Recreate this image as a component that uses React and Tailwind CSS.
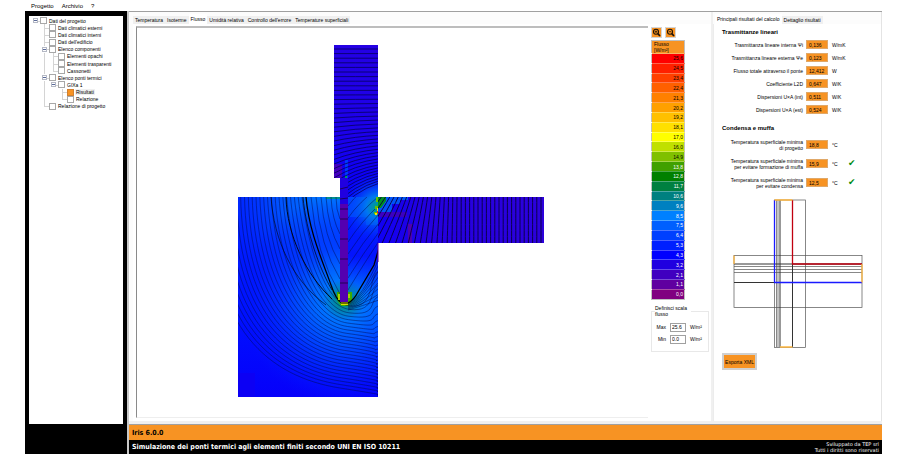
import { useState } from 'react';

// ====================================================
// DATA
// ====================================================
// guides: one entry per indent column
// "v" line passes through, "t" branch, "l" last branch, "b" expander box
const TREE = [
  { label: 'Dati del progetto', guides: ['b'] },
  { label: 'Dati climatici esterni', guides: ['', 't'] },
  { label: 'Dati climatici interni', guides: ['', 't'] },
  { label: "Dati dell'edificio", guides: ['', 't'] },
  { label: 'Elenco componenti', guides: ['', 'b'] },
  { label: 'Elementi opachi', guides: ['', 'v', 't'] },
  { label: 'Elementi trasparenti', guides: ['', 'v', 't'] },
  { label: 'Cassonetti', guides: ['', 'v', 'l'] },
  { label: 'Elenco ponti termici', guides: ['', 'b'] },
  { label: 'GIXa 1', guides: ['', 'v', 'b'] },
  { label: 'Risultati', guides: ['', 'v', '', 't'], active: true },
  { label: 'Relazione', guides: ['', 'v', '', 'l'] },
  { label: 'Relazione di progetto', guides: ['', 'l'] },
];

const SCALE = [
  ['25,6', 'bg-[#ff0000] text-black'],
  ['24,5', 'bg-[#ff2000] text-black'],
  ['23,4', 'bg-[#ff4000] text-black'],
  ['22,4', 'bg-[#ff6000] text-black'],
  ['21,3', 'bg-[#ff8000] text-black'],
  ['20,2', 'bg-[#ffa000] text-black'],
  ['19,2', 'bg-[#ffc000] text-black'],
  ['18,1', 'bg-[#ffe000] text-black'],
  ['17,0', 'bg-[#ffff00] text-black'],
  ['16,0', 'bg-[#c0e000] text-black'],
  ['14,9', 'bg-[#80c000] text-black'],
  ['13,8', 'bg-[#40a000] text-white'],
  ['12,8', 'bg-[#008000] text-white'],
  ['11,7', 'bg-[#008040] text-white'],
  ['10,6', 'bg-[#008080] text-white'],
  ['9,6', 'bg-[#0080c0] text-white'],
  ['8,5', 'bg-[#0080ff] text-white'],
  ['7,5', 'bg-[#0060ff] text-white'],
  ['6,4', 'bg-[#0040ff] text-white'],
  ['5,3', 'bg-[#0020ff] text-white'],
  ['4,3', 'bg-[#0000ff] text-white'],
  ['3,2', 'bg-[#2000e0] text-white'],
  ['2,1', 'bg-[#4000c0] text-white'],
  ['1,1', 'bg-[#6000a0] text-white'],
  ['0,0', 'bg-[#800080] text-white'],
];

const TRANSMITTANCES = [
  ['Trasmittanza lineare interna Ψi', '0,136', 'W/mK'],
  ['Trasmittanza lineare esterna Ψe', '0,123', 'W/mK'],
  ['Flusso totale attraverso il ponte', '12,412', 'W'],
  ['Coefficiente L2D', '0,647', 'W/K'],
  ['Dispersioni U×A (int)', '0,511', 'W/K'],
  ['Dispersioni U×A (est)', '0,524', 'W/K'],
];

const CONDENSATION = [
  ['Temperatura superficiale minima', 'di progetto', '18,8', false],
  ['Temperatura superficiale minima', 'per evitare formazione di muffa', '15,9', true],
  ['Temperatura superficiale minima', 'per evitare condensa', '12,5', true],
];

// ====================================================
// FLUX MAP
// ====================================================
const range = (n) => Array.from({ length: n }, (_, i) => i);

// flow lines that leave the ground surface and turn round the foot of the insulation
const groundLines = range(25).map((i) => {
  const s = i / 24;
  const x0 = 302 - 92 * s;
  const d = 306 + 82 * s;
  const yE = d + 7 - 42 * Math.exp(-7 * s);
  return `M${x0} 197C${x0 + 6 - 6 * s} ${245 + 85 * s} ${324 - 54 * s} ${d - 3 - 8 * s} ${350 - 10 * s} ${d}S368 ${yE + 4 - 5 * s} 379 ${yE}`;
});

const wallLines = range(37).map((i) => {
  const y = 49 + i * 4.6;
  const tilt = Math.max(0, i - 8) ** 2 * 0.04;
  return `M334 ${y}Q354 ${y - tilt * 0.75} 379 ${y - tilt}`;
});

const slabLines = range(40).map((i) => {
  const x = 541 - i * 4.2;
  const slant = Math.max(0, i - 18) ** 2 * 0.09;
  return `M${x} 197C${x - slant * 0.3} 212 ${x - slant * 0.6} 225 ${x - slant} 243`;
});

const FluxMap = () => (
  <svg width="312" height="354" viewBox="237 45 312 354" role="img" aria-label="Flusso">
    <defs>
      <radialGradient id="foot" gradientUnits="userSpaceOnUse" cx="344" cy="300" r="105">
        <stop offset="0" stopColor="#00a050" />
        <stop offset="0.1" stopColor="#0086b0" />
        <stop offset="0.2" stopColor="#0074ff" />
        <stop offset="0.5" stopColor="#0040ff" />
        <stop offset="1" stopColor="#0014ff" stopOpacity="0" />
      </radialGradient>
      <radialGradient id="surface" gradientUnits="userSpaceOnUse" cx="336" cy="190" r="115">
        <stop offset="0" stopColor="#0080ff" />
        <stop offset="0.5" stopColor="#0054ff" />
        <stop offset="1" stopColor="#0028ff" stopOpacity="0" />
      </radialGradient>
      <radialGradient id="corner" gradientUnits="userSpaceOnUse" cx="377" cy="207" r="36">
        <stop offset="0" stopColor="#00a080" />
        <stop offset="0.3" stopColor="#0078f0" />
        <stop offset="1" stopColor="#0020ff" stopOpacity="0" />
      </radialGradient>
      <linearGradient id="wall" x1="0" y1="0" x2="0" y2="1">
        <stop offset="0" stopColor="#2400e4" />
        <stop offset="0.6" stopColor="#1c00ea" />
        <stop offset="1" stopColor="#0400fc" />
      </linearGradient>
      <linearGradient id="slab" x1="0" y1="0" x2="1" y2="0">
        <stop offset="0" stopColor="#1000f4" />
        <stop offset="0.3" stopColor="#2400e0" />
        <stop offset="1" stopColor="#2c00dc" />
      </linearGradient>
      <linearGradient id="ground" x1="0" y1="0" x2="0" y2="1">
        <stop offset="0" stopColor="#0024ff" />
        <stop offset="0.6" stopColor="#0010ff" />
        <stop offset="1" stopColor="#0600fa" />
      </linearGradient>
      <linearGradient id="inner" x1="0" y1="0" x2="0" y2="1">
        <stop offset="0" stopColor="#0020ff" />
        <stop offset="0.6" stopColor="#0414fc" />
        <stop offset="1" stopColor="#0030ff" stopOpacity="0" />
      </linearGradient>
      <clipPath id="groundClip">
        <path d="M238 197H340V302H348V197H378V397H238Z" />
      </clipPath>
      <clipPath id="wallClip">
        <path d="M334 45H378V197H340V178H334Z" />
      </clipPath>
      <clipPath id="slabClip">
        <path d="M378 197H544V243H378Z" />
      </clipPath>
    </defs>

    {/* ground and foundation */}
    <g clipPath="url(#groundClip)">
      <rect x="238" y="197" width="141" height="200" fill="url(#ground)" />
      <path d="M238 373H255V397H238Z" fill="#0c00f4" />
      <rect x="238" y="197" width="102" height="200" fill="url(#surface)" />
      <rect x="238" y="197" width="141" height="200" fill="url(#foot)" />
      <rect x="348" y="197" width="30" height="98" fill="url(#inner)" />
      <path d="M348 217H366V225H378V197H348Z" fill="#0048ff" />
      <rect x="340" y="197" width="38" height="46" fill="url(#corner)" />
      <path d="M326 197H340V199H326Z" fill="#009090" />
      <path d="M337 292H340V302H348V292H352V300L349 306H341L337 300Z" fill="#3cac00" />
      <g fill="none" stroke="#000b50" strokeOpacity="0.8" strokeWidth="0.6">
        {groundLines.map((d) => <path key={d} d={d} />)}
        {range(6).map((i) => (
          <path key={i} d={`M${311 + i * 5} 197Q${316 + i * 4} ${255 - i * 9} 340 ${294 - i * 15}`} />
        ))}
        {range(8).map((i) => (
          <path key={i} d={`M348 ${206 + i * 12}Q${358 + i} ${192 + i * 10} 379 ${178 + i * 9}`} />
        ))}
        {range(8).map((i) => (
          <path key={i} d={`M348 ${303 + i}Q362 ${299 + i} 379 ${258 + i * 6}`} />
        ))}
      </g>
      <g fill="none" stroke="#000">
        <path d="M306 197C309 232 323 262 331 285Q336 300 342 303H348Q354 300 358 292L374 265L379 248" strokeWidth="1.3" />
        <path d="M303 197C306 232 320 270 332 290" strokeWidth="0.7" />
        <path d="M286 197C287 235 306 275 332 299" strokeWidth="0.9" />
        <path d="M271 197C274 240 292 280 326 305" strokeWidth="0.6" />
      </g>
    </g>

    {/* upper wall */}
    <g clipPath="url(#wallClip)">
      <rect x="334" y="45" width="45" height="152" fill="url(#wall)" />
      <path d="M334 164H342V178H334Z" fill="#4400c0" />
      <rect x="345" y="160" width="3" height="24" fill="#0038ff" />
      <rect x="345" y="176" width="2" height="3" fill="#00a060" />
      <rect x="334" y="150" width="45" height="50" fill="url(#corner)" />
      <g fill="none" stroke="#06005a" strokeWidth="0.8">
        {wallLines.map((d) => <path key={d} d={d} />)}
      </g>
    </g>

    {/* floor slab */}
    <g clipPath="url(#slabClip)">
      <rect x="378" y="197" width="166" height="46" fill="url(#slab)" />
      <path d="M378 197H408V200H400V204H392V212H378Z" fill="#0054f8" />
      <path d="M378 212H407V217H378Z" fill="#3c00c0" />
      <path d="M408 224H412V243H408Z" fill="#5000b0" />
      <path d="M378 197H386V201L381 208H378Z" fill="#009020" />
      <g fill="none" stroke="#08003c" strokeWidth="0.9">
        {slabLines.map((d) => <path key={d} d={d} />)}
      </g>
    </g>

    {/* insulation strip */}
    <rect x="340" y="178" width="8" height="30" fill="#2000e0" />
    <rect x="340" y="204" width="8" height="98" fill="#5400b0" />
    <path d="M340 189L348 187M340 199L348 198M340 209H348M340 219H348M340 239H348M340 259H348M340 283H348" stroke="#18003c" strokeWidth="0.8" />
    <path d="M341 302H348V305H341Z" fill="#d8e000" />
    <path d="M338 294H340V300H338ZM348 294H350V298H348Z" fill="#a8d000" />
    <path d="M341 303H348" stroke="#000" strokeWidth="1" />
    <path d="M376 197H378V202H376ZM375 206H378V209H375ZM374 212H378V214H374Z" fill="#60c000" />
    <path d="M377 208H378V211H377ZM375 213H377V215H375Z" fill="#ffe000" />
    <path d="M377 211H378V213H377Z" fill="#ff2000" />
    <path d="M378 243V262" stroke="#6000a0" strokeWidth="1" />
  </svg>
);

// ====================================================
// NODE SECTION
// ====================================================
const NodeDrawing = () => (
  <svg width="130" height="150" viewBox="733 199 130 150" role="img" aria-label="Sezione del nodo">
    <g fill="none" stroke="#555" strokeWidth="0.7">
      <rect x="774.5" y="200" width="31" height="147.5" />
      <rect x="734" y="255.5" width="128" height="52" />
      <path d="M776.5 200V347M778 200V347M734 266.5H862M734 269.5H862M734 272.5H862" />
      <path d="M780 200V347M792.5 200V347M734 264H862M734 282.5H862" stroke="#333" strokeWidth="1" />
    </g>
    <g fill="none" strokeWidth="1.3">
      <path d="M774.5 200V282.5H862" stroke="#1a1aff" />
      <path d="M792.5 200V264H862" stroke="#c00010" />
      <path d="M774.5 200H792.5M780 347H792.5M734 255.5V264M862 264V282.5" stroke="#ffb840" />
    </g>
  </svg>
);

// ====================================================
// SIDEBAR TREE
// ====================================================
const Guide = ({ kind }) => (
  <span className="relative block w-[9px] h-full shrink-0">
    {(kind === 'v' || kind === 't') && <span className="absolute left-[4px] inset-y-0 w-px bg-[#d4d4d4]" />}
    {kind === 'l' && <span className="absolute left-[4px] top-0 h-1/2 w-px bg-[#d4d4d4]" />}
    {(kind === 't' || kind === 'l' || kind === 'b') && <span className="absolute left-[4px] right-0 top-1/2 h-px bg-[#d4d4d4]" />}
    {kind === 'b' && (
      <span className="absolute left-[2px] top-[1px] size-[5px] border border-[#b4b8c4] bg-white flex items-center">
        <span className="w-full h-px bg-[#5a6a9a]" />
      </span>
    )}
  </span>
);

const TreeRow = ({ label, guides, active }) => (
  <li className="flex-1 min-h-0 flex items-center">
    {guides.map((kind, i) => <Guide key={i} kind={kind} />)}
    <label className="flex items-center gap-px whitespace-nowrap">
      <input
        type="checkbox"
        defaultChecked={active}
        className="appearance-none size-[7px] border border-[#a8a8a8] bg-white checked:bg-[#f79323] checked:border-[#d08030]"
      />
      <span className={active ? 'bg-[#f0f0f0] px-px' : 'px-px'}>{label}</span>
    </label>
  </li>
);

// ====================================================
// SMALL PARTS
// ====================================================
const Tabs = ({ items, initial }) => {
  const [current, setCurrent] = useState(initial);
  return (
    <div role="tablist" className="flex items-end h-[10px]">
      {items.map((item) => (
        <button
          key={item}
          type="button"
          role="tab"
          aria-selected={item === current}
          onClick={() => setCurrent(item)}
          className={`px-[2px] whitespace-nowrap ${item === current ? 'h-[10px] bg-white' : 'h-[8px] bg-[#f0f0f0]'}`}
        >
          {item}
        </button>
      ))}
    </div>
  );
};

const ZoomButton = ({ label, sign }) => (
  <button type="button" aria-label={label} className="size-[11px] bg-[#f79323] border border-[#d4d4d4] flex items-center justify-center">
    <svg width="9" height="9" viewBox="0 0 9 9" fill="none" stroke="#1c1206">
      <circle cx="4" cy="3.7" r="2.5" strokeWidth="1.1" />
      <path d="M5.8 5.6L8 8" strokeWidth="1.6" />
      <path d={sign} strokeWidth="0.8" />
    </svg>
  </button>
);

const ValueBox = ({ id, value }) => (
  <input id={id} readOnly value={value} className="w-[22px] h-[9px] px-[2px] bg-[#f79323] border border-[#e0a868] outline-none" />
);

const ScaleField = ({ id, label, value }) => (
  <div className="flex items-center h-[12px]">
    <label htmlFor={id} className="w-[14px] text-right mr-[4px]">{label}</label>
    <input id={id} defaultValue={value} className="w-[16px] h-[9px] px-px bg-white border border-[#a0a0a0] outline-none" />
    <span className="ml-[4px]">W/m²</span>
  </div>
);

// ====================================================
// PAGE
// ====================================================
export default function App() {
  return (
    <div className="min-h-screen flex flex-col px-[25px] bg-white text-black text-[5px] leading-[6px] font-['Liberation_Sans',sans-serif]">
      <nav className="h-[11px] px-[6px] flex items-center gap-[8px] text-[6px]">
        <button type="button">Progetto</button>
        <button type="button">Archivio</button>
        <button type="button">?</button>
      </nav>

      <div className="flex-1 flex">
        <aside className="w-[102px] shrink-0 bg-black px-[4px] pt-[5px] pb-[30px] flex">
          <div className="flex-1 bg-white pt-px pl-[2px]">
            <ul className="h-[93px] flex flex-col">
              {TREE.map((row) => <TreeRow key={row.label} {...row} />)}
            </ul>
          </div>
        </aside>

        <div className="flex-1 min-w-0 flex flex-col border-l-2 border-[#c8c8c8]">
          <main className="flex-1 flex border-t border-b border-[#a0a0a0] bg-[#f0f0f0]">
            <section className="flex-1 min-w-0 bg-[#fcfcfc] pl-[4px] pt-[2px] mb-[3px] flex flex-col">
              <Tabs
                initial="Flusso"
                items={['Temperatura', 'Isoterme', 'Flusso', 'Umidità relativa', "Controllo dell'errore", 'Temperature superficiali']}
              />
              <div className="flex-1 flex bg-white pl-[3px] pt-[2px] pb-[3px]">
                <div className="flex-1 min-w-0 border-t-2 border-l border-t-[#bdbdbd] border-l-[#8a8a8a] border-b border-b-[#eeeeee] flex justify-center pt-[17px]">
                  <FluxMap />
                </div>
                <div className="w-[63px] pl-[3px] pt-px">
                  <div className="flex gap-[3px] pb-[2px]">
                    <ZoomButton label="Ingrandisci" sign="M2.8 3.7H5.2M4 2.5V4.9" />
                    <ZoomButton label="Riduci" sign="M2.8 3.7H5.2" />
                  </div>
                  <table className="w-[34px] h-[260px] border border-[#c0c0c0] border-collapse">
                    <thead>
                      <tr>
                        <th className="h-[13px] p-0 pl-[2px] bg-[#f79323] text-left font-normal">Flusso<br />[W/m²]</th>
                      </tr>
                    </thead>
                    <tbody>
                      {SCALE.map(([value, tone]) => (
                        <tr key={value}>
                          <td className={`p-0 pr-px text-right border-t border-white/30 ${tone}`}>{value}</td>
                        </tr>
                      ))}
                    </tbody>
                  </table>
                  <fieldset className="w-[58px] mt-[5px] pb-[6px] border border-[#e8e8e8]">
                    <legend className="w-[36px] ml-[3px]">Definisci scala<br />flusso</legend>
                    <div className="pt-[4px]">
                      <ScaleField id="max" label="Max" value="25.6" />
                      <ScaleField id="min" label="Min" value="0.0" />
                    </div>
                  </fieldset>
                </div>
              </div>
            </section>

            <section className="w-[169px] ml-[2px] mb-[3px] pt-[2px] flex flex-col bg-[#fcfcfc] border-r border-[#e4e4e4]">
              <div className="pl-[2px]">
                <Tabs initial="Principali risultati del calcolo" items={['Principali risultati del calcolo', 'Dettaglio risultati']} />
              </div>
              <div className="flex-1 bg-white border-l border-[#ececec] pl-[8px]">
                <h2 className="pt-[4px] pb-[2px] leading-[8px] text-[6px] font-bold">Trasmittanze lineari</h2>
                {TRANSMITTANCES.map(([label, value, unit], i) => (
                  <div key={label} className="flex items-center h-[13px]">
                    <label htmlFor={`t${i}`} className="w-[81px] text-right mr-[3px] whitespace-nowrap">{label}</label>
                    <ValueBox id={`t${i}`} value={value} />
                    <span className="ml-[4px]">{unit}</span>
                  </div>
                ))}
                <h2 className="pt-[8px] pb-[3px] leading-[8px] text-[6px] font-bold">Condensa e muffa</h2>
                {CONDENSATION.map(([first, second, value, ok], i) => (
                  <div key={second} className="flex items-center h-[19px]">
                    <label htmlFor={`c${i}`} className="w-[81px] text-right mr-[3px] whitespace-nowrap">{first}<br />{second}</label>
                    <ValueBox id={`c${i}`} value={value} />
                    <span className="ml-[4px] w-[16px]">°C</span>
                    {ok && <span className="text-[9px] leading-[9px] text-[#008a10] font-['DejaVu_Sans',sans-serif]">✔</span>}
                  </div>
                ))}
                <div className="pt-[7px] pl-[11px]">
                  <NodeDrawing />
                </div>
                <button type="button" className="mt-[4px] h-[17px] w-[35px] bg-[#f79323] border-2 border-[#d0d0d0] whitespace-nowrap">Esporta XML</button>
              </div>
            </section>
          </main>

          <footer className="font-['DejaVu_Sans',sans-serif]">
            <div className="h-[15px] px-[3px] flex items-center bg-[#f79323] font-bold text-[7px] font-['DejaVu_Sans_Condensed','DejaVu_Sans',sans-serif]">Iris 6.0.0</div>
            <div className="h-[14px] px-[3px] flex items-center justify-between bg-black text-white">
              <p className="font-bold text-[7px] font-['DejaVu_Sans_Condensed','DejaVu_Sans',sans-serif]">Simulazione dei ponti termici agli elementi finiti secondo UNI EN ISO 10211</p>
              <p className="text-right">Sviluppato da TEP srl<br />Tutti i diritti sono riservati</p>
            </div>
          </footer>
        </div>
      </div>
    </div>
  );
}
